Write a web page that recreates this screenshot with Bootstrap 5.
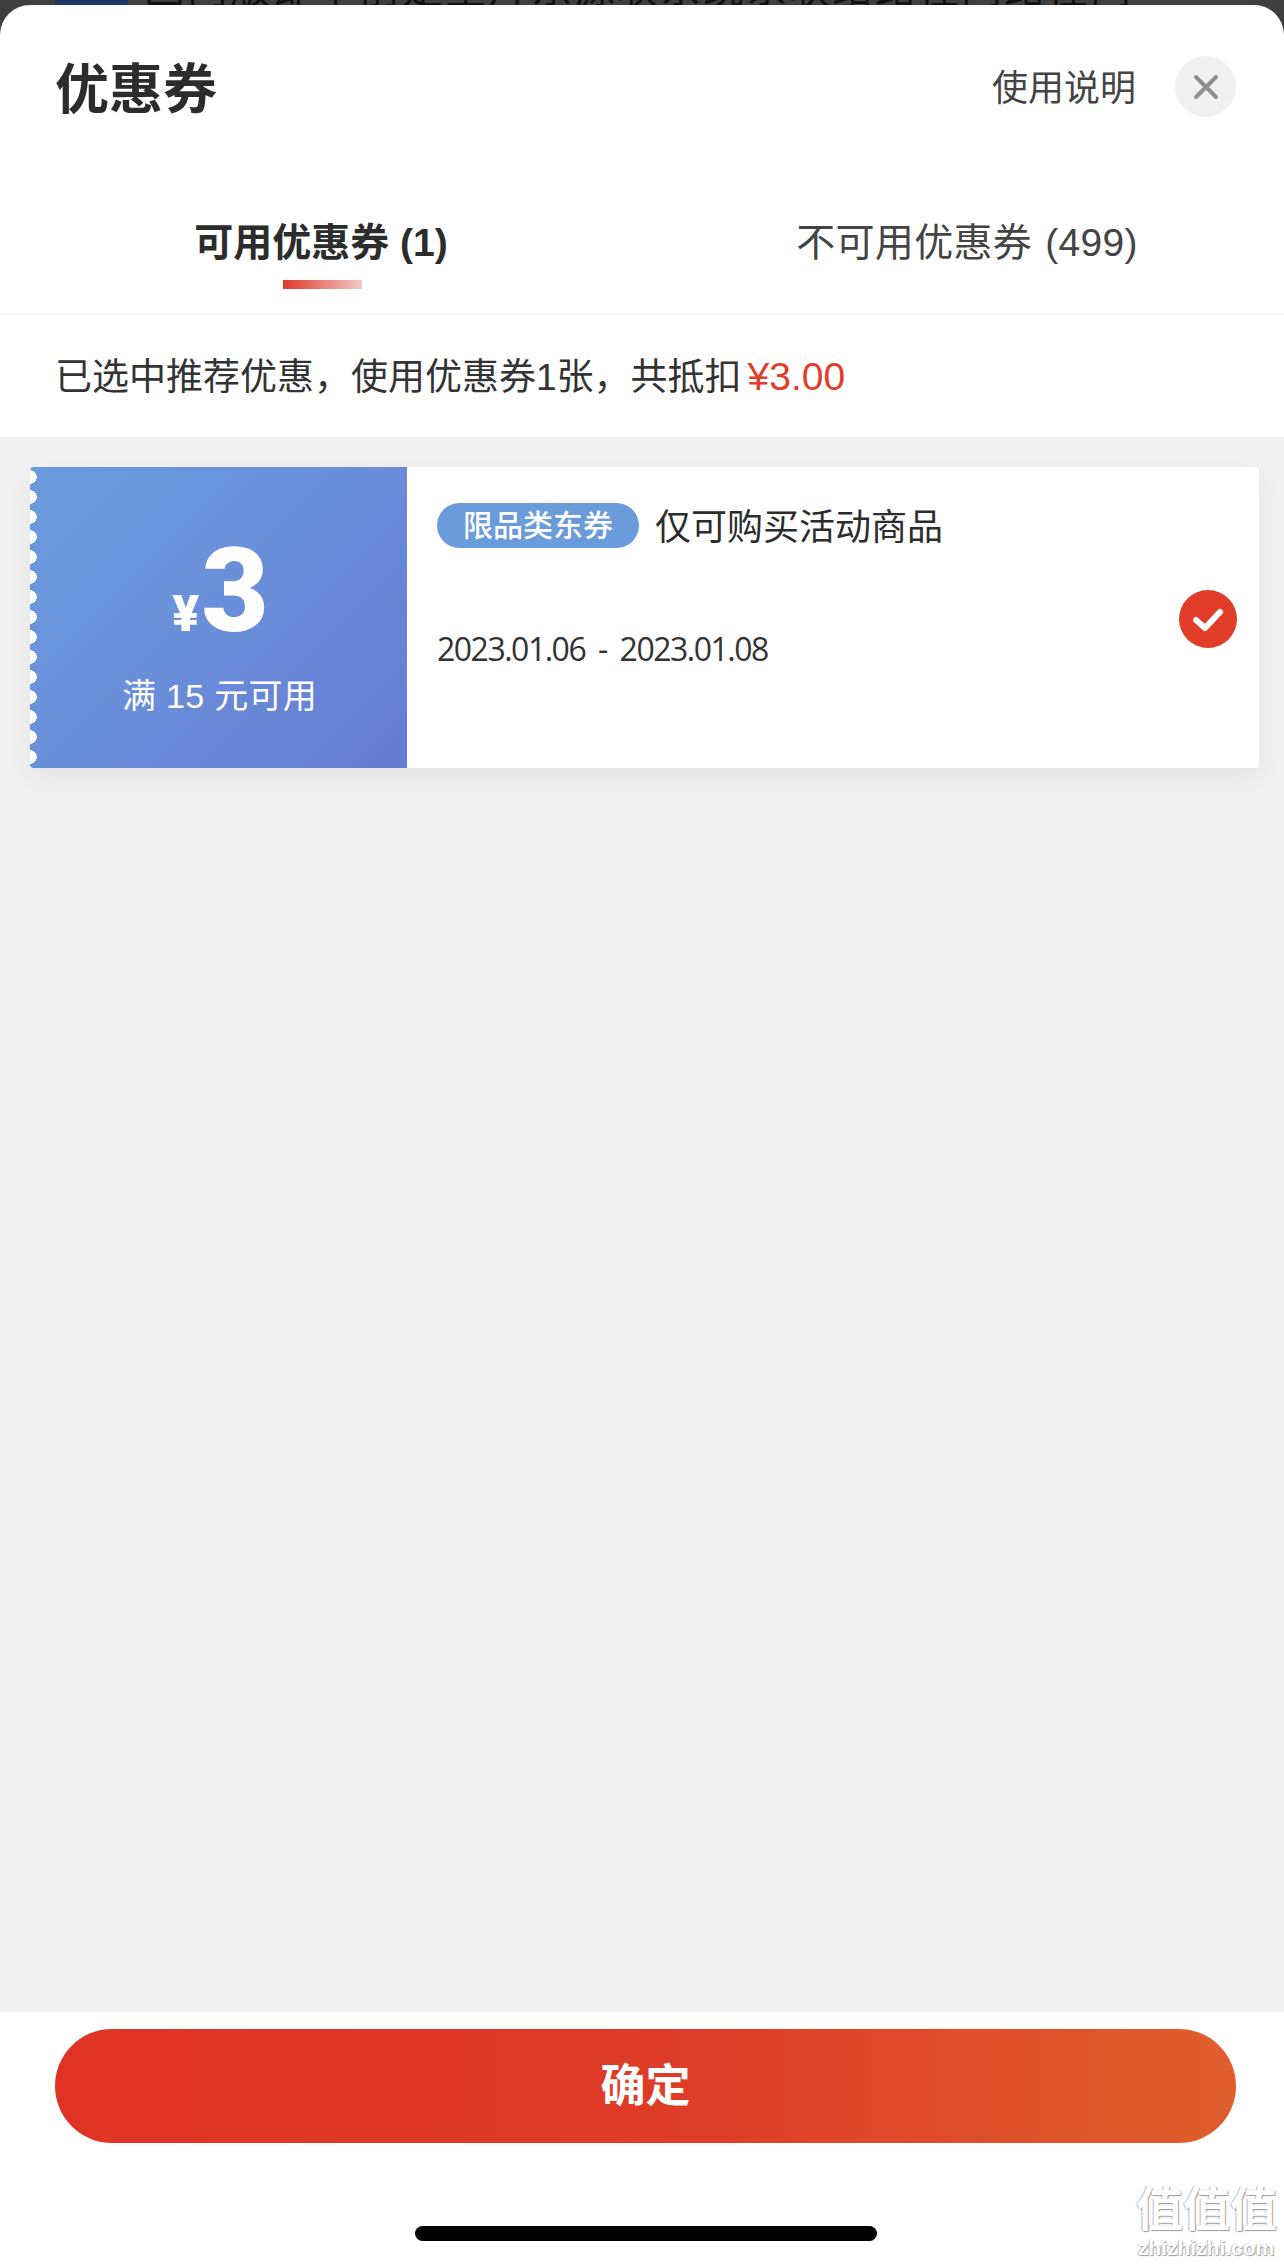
<!DOCTYPE html>
<html lang="zh-CN">
<head>
  <meta charset="UTF-8" />
  <meta name="viewport" content="width=device-width, initial-scale=1.0"/>
  <title>优惠券</title>
  <link href="https://cdn.jsdelivr.net/npm/bootstrap@5.3.0/dist/css/bootstrap.min.css" rel="stylesheet" />
  <style>
    html, body { height: 100%; }
    body {
      background: #3f3f3f;
      color: #2c2c2c;
      font-family: "Liberation Sans", "Noto Sans CJK SC", sans-serif;
    }
    .page-wrap { width: 1284px; height: 2265px; overflow: hidden; }
    .peek { height: 5px; padding-left: 55px; overflow: hidden; }
    .peek-thumb { width: 73px; height: 5px; background: #1f3566; }
    .peek-text { font-size: 41px; letter-spacing: 2px; line-height: 40px; margin-top: -35px; color: #111; white-space: nowrap; font-family: "Noto Sans CJK SC", sans-serif; }
    .sheet { height: 2260px; background: #fff; border-radius: 30px 30px 0 0; overflow: hidden; position: relative; }
    .sheet-head { height: 165px; padding: 0 48px 0 55px; }
    .sheet-title { font-size: 54px; font-weight: 700; line-height: 1; margin: 5px 0 0; }
    .help-link { font-size: 36px; color: #444; margin: 2px 39px 0 0; }
    .close-btn { width: 61px; height: 61px; border-radius: 50%; background: #f0f0f0; border: 0; padding: 0; margin-top: -2px; }
    .tab-row { height: 145px; border-bottom: 2px solid #f6f6f6; }
    .tab-item { width: 642px; font-size: 39px; color: #444; padding-top: 43px; line-height: 60px; position: relative; }
    .tab-item.on { color: #2c2c2c; font-weight: 700; }
    .tab-item.off { padding-left: 8px; word-spacing: 2px; letter-spacing: .3px; }
    .tab-bar { position: absolute; left: 283px; top: 110px; width: 79px; height: 9px; background: linear-gradient(90deg, #e0392b, #f3c9c4); }
    .pick-info { height: 122px; font-size: 37px; padding: 3px 0 0 55px; color: #333; }
    .pick-info span { color: #e23c2a; font-size: 39px; margin-left: 6px; }
    .list-area { height: 1575px; background: #f1f1f1; padding: 30px 25px 0 30px; }
    .coupon { height: 301px; background: #fff; box-shadow: 0 10px 24px rgba(0,0,0,.06); border-radius: 4px; }
    .coupon-left {
      width: 377px; color: #fff; position: relative; border-radius: 4px 0 0 4px;
      background: linear-gradient(135deg, #6a9bdd 0%, #6a90da 45%, #667ad2 100%);
    }
    .coupon-left::before {
      content: ""; position: absolute; left: 0; top: 0; bottom: 0; width: 7px;
      background: radial-gradient(circle at 0 10px, #fff 6.5px, transparent 7px) 0 0 / 7px 20px repeat-y;
    }
    .price { height: 118px; margin-top: 64px; padding-left: 4px; }
    .price-cur { font-size: 50px; font-weight: 900; font-family: Roboto, "Liberation Sans", sans-serif; line-height: 1; margin: 0 2px 10px 0; }
    .price-num { font-size: 116px; font-weight: 900; font-family: Roboto, "Liberation Sans", sans-serif; line-height: 1; }
    .price-note { font-size: 34px; margin-top: 22px; letter-spacing: .3px; padding-left: 2px; }
    .coupon-main { padding: 28px 0 0 30px; position: relative; }
    .tag-pill { background: #6a9bdb; color: #fff; font-size: 30px; font-weight: 500; height: 45px; width: 202px; border-radius: 23px; line-height: 45px; text-align: center; }
    .coupon-name { font-size: 36px; margin: 6px 0 0 16px; color: #2c2c2c; }
    .coupon-date { font-size: 32px; margin-top: 70px; color: #333; font-family: "Open Sans", sans-serif; letter-spacing: -1.5px; word-spacing: 6px; }
    .check-dot { position: absolute; right: 22px; top: 123px; width: 58px; height: 58px; }
    .sheet-foot { height: 248px; background: #fff; padding: 17px 48px 0 55px; }
    .ok-btn {
      width: 100%; height: 114px; border: 0; border-radius: 57px; color: #fff; font-size: 45px; font-weight: 700; padding-top: 2px;
      background: linear-gradient(90deg, #e03325 0%, #de3d27 55%, #e05e2d 100%);
    }
    .home-bar { width: 462px; height: 15px; background: #000; border-radius: 8px; margin: 83px auto 0; }
    .wm { position: absolute; right: 8px; bottom: 7px; width: 140px; text-align: center; color: #fff; line-height: 1; text-shadow: 1px 1px 1px #999, -1px 0 1px #bbb; }
    .wm-top { font-size: 47px; font-weight: 700; white-space: nowrap; font-family: "Noto Sans CJK SC", sans-serif; }
    .wm-sub { font-size: 21px; margin-top: 8px; font-weight: 700; }
  </style>
</head>
<body>

<div class="page-wrap">
  <div class="peek d-flex gap-3">
    <div class="peek-thumb"></div>
    <div class="peek-text">国内版即下前是皇片东源联系统系联络路径间路径间</div>
  </div>

  <div class="sheet">
    <!-- Header -->
    <div class="sheet-head d-flex align-items-center">
      <h1 class="sheet-title me-auto">优惠券</h1>
      <span class="help-link">使用说明</span>
      <button class="close-btn d-flex align-items-center justify-content-center" aria-label="关闭">
        <svg width="26" height="26" viewBox="0 0 26 26"><path d="M3 3L23 23M23 3L3 23" stroke="#8e8e8e" stroke-width="4" stroke-linecap="round"/></svg>
      </button>
    </div>

    <!-- Tabs -->
    <div class="tab-row d-flex">
      <div class="tab-item on text-center">可用优惠券 (1)<div class="tab-bar"></div></div>
      <div class="tab-item off text-center">不可用优惠券 (499)</div>
    </div>

    <div class="pick-info d-flex align-items-center">已选中推荐优惠，使用优惠券1张，共抵扣<span>¥3.00</span></div>

    <!-- Coupons -->
    <div class="list-area">
      <div class="coupon d-flex">
        <div class="coupon-left text-center">
          <div class="price d-flex justify-content-center align-items-end">
            <span class="price-cur">¥</span><span class="price-num">3</span>
          </div>
          <div class="price-note">满 15 元可用</div>
        </div>
        <div class="coupon-main flex-grow-1">
          <div class="d-flex align-items-center">
            <span class="tag-pill">限品类东券</span>
            <span class="coupon-name">仅可购买活动商品</span>
          </div>
          <div class="coupon-date">2023.01.06 - 2023.01.08</div>
          <svg class="check-dot" viewBox="0 0 58 58"><circle cx="29" cy="29" r="29" fill="#e03c28"/><path d="M17 30L26 38L41 22" fill="none" stroke="#fff" stroke-width="6" stroke-linecap="round" stroke-linejoin="round"/></svg>
        </div>
      </div>
    </div>

    <div class="sheet-foot">
      <button class="ok-btn">确定</button>
      <div class="home-bar"></div>
    </div>

    <div class="wm">
      <div class="wm-top">值值值</div>
      <div class="wm-sub">zhizhizhi.com</div>
    </div>
  </div>
</div>

<script src="https://cdn.jsdelivr.net/npm/bootstrap@5.3.0/dist/js/bootstrap.bundle.min.js"></script>
</body>
</html>
